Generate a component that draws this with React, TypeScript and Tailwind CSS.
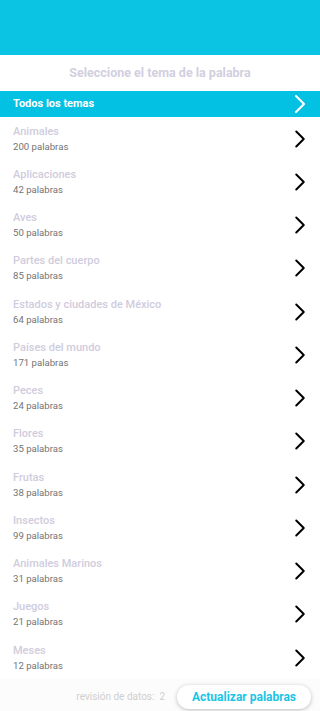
import { ChevronRight } from 'lucide-react';

const temas = [
  { nombre: 'Animales', total: 200 },
  { nombre: 'Aplicaciones', total: 42 },
  { nombre: 'Aves', total: 50 },
  { nombre: 'Partes del cuerpo', total: 85 },
  { nombre: 'Estados y ciudades de México', total: 64 },
  { nombre: 'Países del mundo', total: 171 },
  { nombre: 'Peces', total: 24 },
  { nombre: 'Flores', total: 35 },
  { nombre: 'Frutas', total: 38 },
  { nombre: 'Insectos', total: 99 },
  { nombre: 'Animales Marinos', total: 31 },
  { nombre: 'Juegos', total: 21 },
  { nombre: 'Meses', total: 12 },
];

export default function App() {
  return (
    <div
      className="w-[320px] h-[711px] flex flex-col bg-white overflow-hidden"
      style={{ fontFamily: 'Roboto, "Noto Sans", sans-serif' }}
    >
      {/* barra superior */}
      <div className="h-[55px] bg-[#0bc3e3] shrink-0" />

      <div className="h-[36px] flex items-center justify-center shrink-0">
        <span className="text-[12.5px] font-bold text-[#d2cfdf]">Seleccione el tema de la palabra</span>
      </div>

      <div className="h-[26px] bg-[#02c1e2] flex items-center justify-between pl-[13px] pr-[4px] shrink-0">
        <span className="text-[11px] font-bold text-white">Todos los temas</span>
        <ChevronRight className="w-[32px] h-[32px] text-white" strokeWidth={1.6} />
      </div>

      <div className="flex-1 flex flex-col">
        {temas.map((t) => (
          <div key={t.nombre} className="h-[43.25px] flex items-center justify-between pl-[13px] pr-[5px]">
            <div className="flex flex-col leading-none">
              <span className="text-[11px] font-medium text-[#d0ccdd] leading-[15px]">{t.nombre}</span>
              <span className="text-[9.6px] text-[#747474] leading-[15px]">{t.total} palabras</span>
            </div>
            <ChevronRight className="w-[30px] h-[30px] text-black" strokeWidth={1.6} />
          </div>
        ))}
      </div>

      <div className="h-[35px] bg-[#fcfcfc] flex items-center justify-end gap-[12px] pr-[9px] shrink-0">
        <span className="text-[10px] text-[#cfcfcf]">revisión de datos:&nbsp;&nbsp;2</span>
        <button className="w-[134px] h-[24px] rounded-full bg-white shadow-[0_1px_4px_rgba(0,0,0,0.25)] text-[12px] font-bold text-[#1ac4e6]">
          Actualizar palabras
        </button>
      </div>
      <div className="h-[3px] bg-[#7a7a7a] shrink-0" />
    </div>
  );
}
